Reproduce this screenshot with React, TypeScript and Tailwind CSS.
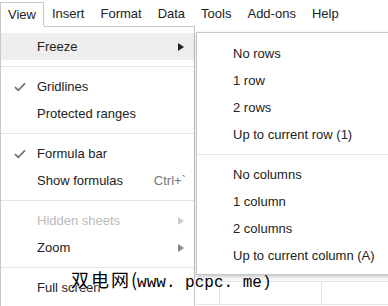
import React from 'react';

type Item = {
  label: string;
  checked?: boolean;
  shortcut?: string;
  submenu?: boolean;
  disabled?: boolean;
  active?: boolean;
};

const menuBar = ['Insert', 'Format', 'Data', 'Tools', 'Add-ons', 'Help'];

const viewGroups: Item[][] = [
  [{ label: 'Freeze', submenu: true, active: true }],
  [{ label: 'Gridlines', checked: true }, { label: 'Protected ranges' }],
  [{ label: 'Formula bar', checked: true }, { label: 'Show formulas', shortcut: 'Ctrl+`' }],
  [{ label: 'Hidden sheets', submenu: true, disabled: true }, { label: 'Zoom', submenu: true }],
  [{ label: 'Full screen' }],
];

const freezeGroups = [
  ['No rows', '1 row', '2 rows', 'Up to current row (1)'],
  ['No columns', '1 column', '2 columns', 'Up to current column (A)'],
];

function Check() {
  return (
    <svg width="12" height="10" viewBox="0 0 12 10">
      <path d="M1 5.2 L4.3 8.4 L11 1.4" fill="none" stroke="#707070" strokeWidth="1.7" />
    </svg>
  );
}

function Arrow({ color }: { color: string }) {
  return (
    <svg width="6" height="8" viewBox="0 0 6 8">
      <path d="M0 0 L6 4 L0 8 Z" fill={color} />
    </svg>
  );
}

function ViewRow({ item }: { item: Item }) {
  const arrowColor = item.active ? '#222' : item.disabled ? '#ccc' : '#888';
  return (
    <div
      className={`flex h-[27px] items-center ${item.active ? 'bg-[#eeeeee]' : ''} ${
        item.disabled ? 'text-[#bbbbbb]' : 'text-[#222]'
      }`}
    >
      <div className="flex w-[36px] shrink-0 pl-[13px]">{item.checked && <Check />}</div>
      <span className="flex-1 whitespace-nowrap">{item.label}</span>
      {item.shortcut && <span className="pr-[8px] text-[#777]">{item.shortcut}</span>}
      {item.submenu && (
        <span className="flex pr-[10px]">
          <Arrow color={arrowColor} />
        </span>
      )}
    </div>
  );
}

export default function App() {
  return (
    <div className="relative h-[306px] w-[388px] overflow-hidden bg-white font-['Liberation_Sans',Arial,sans-serif] text-[13px] text-[#222]">
      {/* menu bar */}
      <div className="flex h-[26px] items-end">
        <div className="flex h-[24px] items-center border border-b-0 border-[#c8c8c8] px-[7px]">View</div>
        {menuBar.map((m) => (
          <div key={m} className="flex h-[24px] items-center px-[8px]">
            {m}
          </div>
        ))}
      </div>

      <div className="flex h-[280px]">
        {/* View dropdown */}
        <div className="flex w-[195px] shrink-0 flex-col border-x border-[#c8c8c8]">
          <div className="flex">
            <div className="w-[43px]" />
            <div className="flex-1 border-t border-[#c8c8c8]" />
          </div>
          <div className="pt-[6px]">
            {viewGroups.map((group, gi) => (
              <div key={gi}>
                {gi > 0 && <div className="my-[6px] h-px bg-[#e5e5e5]" />}
                {group.map((item) => (
                  <ViewRow key={item.label} item={item} />
                ))}
              </div>
            ))}
          </div>
        </div>

        {/* right side: Freeze submenu over the sheet grid */}
        <div className="flex flex-1 flex-col pl-[1px] pt-[6px]">
          <div className="w-[220px] border border-[#c8c8c8] bg-white pb-[5px] pt-[7px] shadow-[0_2px_4px_rgba(0,0,0,0.22)]">
            {freezeGroups.map((group, gi) => (
              <div key={gi}>
                {gi > 0 && <div className="my-[6px] h-px bg-[#e5e5e5]" />}
                {group.map((label) => (
                  <div key={label} className="flex h-[27px] items-center whitespace-nowrap pl-[36px]">
                    {label}
                  </div>
                ))}
              </div>
            ))}
          </div>
          <div className="mt-[6px] flex h-[24px] border-y border-[#e2e2e2]">
            <div className="w-[24px] border-r border-[#e2e2e2]" />
            <div className="w-[102px] border-r border-[#e2e2e2]" />
          </div>
        </div>
      </div>

      {/* site watermark */}
      <div className="absolute left-[71px] top-[266px] flex items-baseline whitespace-nowrap text-black [text-shadow:0_0_2px_#fff,0_0_2px_#fff]">
        <span className="font-['Noto_Sans_CJK_SC',sans-serif] text-[18px] leading-[26px] tracking-[2px]">双电网</span>
        <span className="font-['Noto_Sans_CJK_SC',sans-serif] text-[18px] leading-[26px]">(</span>
        <span className="font-['Liberation_Mono',monospace] text-[16px] leading-[26px]">www. pcpc. me)</span>
      </div>
    </div>
  );
}
